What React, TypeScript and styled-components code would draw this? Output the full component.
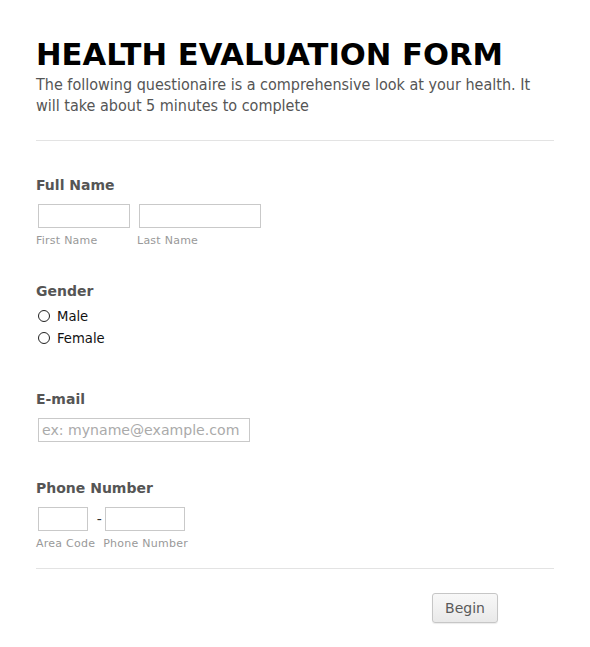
import React from "react";
import styled, { createGlobalStyle } from "styled-components";

const Global = createGlobalStyle`
  html, body { margin: 0; padding: 0; background: #fff; }
  body { font-family: "DejaVu Sans", sans-serif; }
  * { box-sizing: border-box; }
`;

const Page = styled.div`
  width: 590px;
  padding: 37px 36px 20px;
`;

const Title = styled.h1`
  margin: 0;
  font-family: "DejaVu Sans", sans-serif;
  font-weight: bold;
  font-size: 30.6px;
  line-height: 36px;
  color: #000;
`;

const Description = styled.p`
  margin: 1px 0 0;
  font-family: "DejaVu Sans Condensed", "DejaVu Sans", sans-serif;
  font-stretch: condensed;
  font-size: 16px;
  line-height: 21px;
  color: #555;
`;

const Divider = styled.div<{ $top: number }>`
  height: 1px;
  background: #e3e3e3;
  margin-top: ${(p) => p.$top}px;
`;

const Field = styled.div<{ $top: number }>`
  display: flex;
  flex-direction: column;
  padding-top: ${(p) => p.$top}px;
`;

const Label = styled.div`
  font-weight: bold;
  font-size: 14px;
  line-height: 17px;
  color: #555;
`;

const InputRow = styled.div`
  display: flex;
  align-items: flex-start;
  margin-top: 10px;
`;

const Part = styled.div<{ $gap?: number }>`
  display: flex;
  flex-direction: column;
  align-items: flex-start;
  margin-left: ${(p) => p.$gap ?? 0}px;
`;

const TextBox = styled.input<{ $w: number }>`
  width: ${(p) => p.$w}px;
  height: 24px;
  margin: 0 0 0 2px;
  border: 1px solid #c9c9c9;
  border-radius: 0;
  background: #fff;
  padding: 0 3px;
  font-family: "DejaVu Sans", sans-serif;
  font-size: 14.1px;
  color: #555;
  outline: none;
  &::placeholder { color: #aaa; }
`;

const SubLabel = styled.span`
  margin-top: 6px;
  font-size: 11px;
  letter-spacing: 0.25px;
  line-height: 13px;
  color: #999;
`;

const Dash = styled.span`
  width: 8px;
  height: 24px;
  line-height: 24px;
  text-align: center;
  font-size: 14px;
  color: #333;
`;

const RadioList = styled.div`
  display: flex;
  flex-direction: column;
  margin-top: 5px;
  margin-bottom: 5px;
`;

const RadioRow = styled.label`
  display: flex;
  align-items: center;
  height: 22px;
  font-size: 13.2px;
  color: #111;
`;

const Circle = styled.span`
  width: 12px;
  height: 12px;
  margin: 0 7px 0 2px;
  border: 1px solid #222;
  border-radius: 50%;
  background: #fff;
`;

const Footer = styled.div`
  display: flex;
  justify-content: flex-end;
  padding: 24px 56px 0 0;
`;

const Button = styled.button`
  width: 66px;
  height: 30px;
  border: 1px solid #c6c6c6;
  border-radius: 3px;
  background: linear-gradient(#f8f8f8, #e9e9e9);
  box-shadow: 0 1px 1px rgba(0, 0, 0, 0.08);
  font-family: "DejaVu Sans", sans-serif;
  font-size: 14px;
  color: #5a5a5a;
  padding: 0;
`;

export default function App() {
  return (
    <>
      <Global />
      <Page>
        <Title>HEALTH EVALUATION FORM</Title>
        <Description>
          The following questionaire is a comprehensive look at your health. It will take about 5 minutes to complete
        </Description>
        <Divider $top={24} />

        <Field $top={36}>
          <Label>Full Name</Label>
          <InputRow>
            <Part>
              <TextBox $w={92} />
              <SubLabel>First Name</SubLabel>
            </Part>
            <Part $gap={7}>
              <TextBox $w={122} />
              <SubLabel>Last Name</SubLabel>
            </Part>
          </InputRow>
        </Field>

        <Field $top={36}>
          <Label>Gender</Label>
          <RadioList>
            <RadioRow>
              <Circle />
              Male
            </RadioRow>
            <RadioRow>
              <Circle />
              Female
            </RadioRow>
          </RadioList>
        </Field>

        <Field $top={37}>
          <Label>E-mail</Label>
          <InputRow>
            <TextBox $w={212} placeholder="ex: myname@example.com" />
          </InputRow>
        </Field>

        <Field $top={38}>
          <Label>Phone Number</Label>
          <InputRow>
            <Part>
              <TextBox $w={50} />
              <SubLabel>Area Code</SubLabel>
            </Part>
            <Dash>-</Dash>
            <Part>
              <TextBox $w={80} />
              <SubLabel>Phone Number</SubLabel>
            </Part>
          </InputRow>
        </Field>

        <Divider $top={18} />
        <Footer>
          <Button>Begin</Button>
        </Footer>
      </Page>
    </>
  );
}
